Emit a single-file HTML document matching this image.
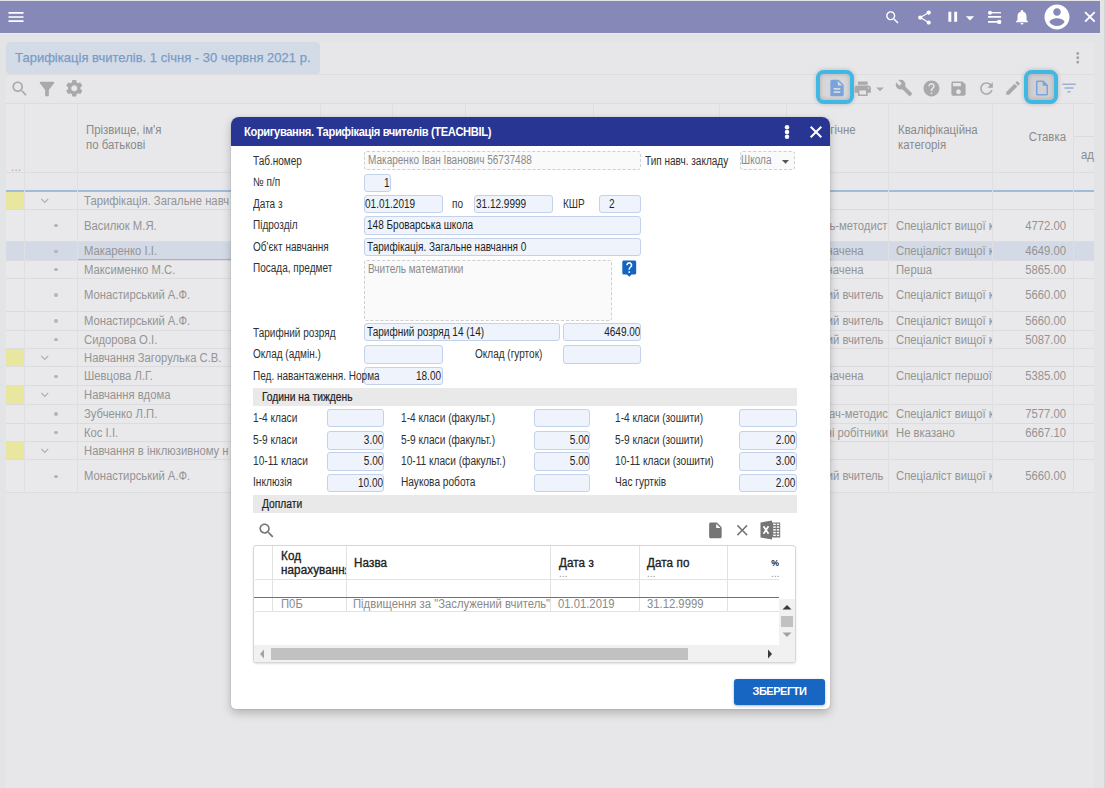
<!DOCTYPE html>
<html><head><meta charset="utf-8">
<style>
*{box-sizing:border-box;margin:0;padding:0}
html,body{width:1106px;height:788px;overflow:hidden}
body{position:relative;background:#e3e4e6;font-family:"Liberation Sans",sans-serif;font-size:12px;color:#8e8e8e}
.abs{position:absolute}
svg{position:absolute;display:block}
#topbar{left:0;top:1px;width:1100px;height:32px;background:#8688b7}
#sbar{left:1100px;top:0;width:6px;height:788px;background:#e4e4e6}
#sbar i{position:absolute;left:3.5px;top:0;width:2.5px;height:788px;background:#d5d5d7}
#panel{left:6px;top:42px;width:1087.5px;height:746px;background:#e7e7e9}
#tab{left:6px;top:42px;width:313.5px;height:32px;letter-spacing:.02px;background:#d3dbe7;border-radius:4px;color:#7b9bc6;-webkit-text-stroke:.25px #7b9bc6;font-size:13px;line-height:31px;padding-left:9px;white-space:nowrap}
.hl{background:#dcdcde;height:1px}
.vl{background:#dfdfe1;width:1px}
.t{white-space:nowrap;color:#949494;font-size:12px;letter-spacing:0}
.th{white-space:nowrap;color:#8a8a8a;font-size:12px}
.num{text-align:right}
.row{left:6px;width:1088px;background:#e9e9eb}
.dot{border-radius:2px;background:#b4b4b6}
.yel{background:#e9e6a0}
/* dialog */
#dlg{left:231px;top:117px;width:599px;height:592px;background:#fff;border-radius:8px 8px 5px 5px;box-shadow:0 4px 10px rgba(0,0,0,.23),0 0 2px rgba(0,0,0,.14)}
#dhead{left:231px;top:117px;width:599px;height:29px;background:#283593;border-radius:8px 8px 0 0}
.dt{white-space:nowrap;color:#fff;font-weight:bold;font-size:12px;letter-spacing:-.4px}
.l{white-space:nowrap;color:#303030;font-size:12px;letter-spacing:0}
.f{background:#eef3fc;border:1px solid #c3d2ea;border-radius:3px;color:#1f1f1f;font-size:12px;letter-spacing:0;white-space:nowrap;overflow:hidden;line-height:16px;padding:0 2px}
.fd{background:#fafafa;border:1px dashed #cfcfcf;border-radius:3px;color:#8a8a8a;font-size:12px;letter-spacing:0;white-space:nowrap;overflow:hidden;line-height:16px;padding:0 2.500px}
.r{text-align:right;padding-right:0}
.sec{background:#e9e9ea;color:#2b2b2b;font-size:12px;letter-spacing:0;white-space:nowrap}
.gh{white-space:nowrap;color:#222;font-size:12px;letter-spacing:.1px;-webkit-text-stroke:.35px #222}
.gt{white-space:nowrap;color:#8a8a8a;font-size:12px}
.sx{display:inline-block;transform:scaleX(.835);transform-origin:0 50%}
.r .sx{transform-origin:100% 50%}
</style></head><body>
<div class="abs" id="topbar"></div>
<div class="abs" style="left:0;top:33px;width:1100px;height:1px;background:#eaeaef"></div>
<div class="abs" id="sbar"><i></i></div>
<div class="abs" id="panel"></div>
<div class="abs" id="tab">Тарифікація вчителів. 1 січня - 30 червня 2021 р.</div>

<div class="abs " style="left:6px;top:74.2px;width:1088px;height:1px;background:#dededf"></div>
<div class="abs hl" style="left:6px;top:103px;width:1088px;height:1px;"></div>
<div class="abs " style="left:6px;top:104px;width:1088px;height:86px;background:#e8e8ea"></div>
<div class="abs hl" style="left:6px;top:172px;width:1088px;height:1px;"></div>
<div class="abs " style="left:6px;top:191px;width:1088px;height:18.4px;background:#e9e9eb"></div>
<div class="abs yel" style="left:6px;top:191px;width:18px;height:18.4px;"></div>
<svg style="left:36.55px;top:192.75px" width="15.50" height="15.50" viewBox="0 0 24 24" fill="#b4b4b6"><path d="M16.59 8.59L12 13.17 7.41 8.59 6 10l6 6 6-6z"/></svg>
<div class="abs t" style="left:84px;top:193.5px;line-height:14px;transform:scaleX(0.94);transform-origin:0 50%;">Тарифікація. Загальне навч</div>
<div class="abs " style="left:6px;top:209.4px;width:1088px;height:32.3px;background:#e9e9eb"></div>
<div class="abs dot" style="left:54.4px;top:224.25px;width:3.2px;height:3.2px;"></div>
<div class="abs t" style="left:84px;top:218.85px;line-height:14px;transform:scaleX(0.94);transform-origin:0 50%;">Василюк М.Я.</div>
<div class="abs t" style="left:787px;top:218.85px;line-height:14px;transform:scaleX(0.94);transform-origin:100% 50%;width:100.5px;text-align:right">ь-методист</div>
<div class="abs t" style="left:896px;top:218.85px;line-height:14px;transform:scaleX(0.94);transform-origin:0 50%;width:102.13px;overflow:hidden">Спеціаліст вищої к</div>
<div class="abs t" style="left:1000px;top:218.85px;line-height:14px;transform:scaleX(0.94);transform-origin:100% 50%;width:66px;text-align:right">4772.00</div>
<div class="abs " style="left:6px;top:241.7px;width:1088px;height:18.3px;background:#d3dae6"></div>
<div class="abs dot" style="left:54.4px;top:249.55px;width:3.2px;height:3.2px;"></div>
<div class="abs t" style="left:84px;top:244.15px;line-height:14px;transform:scaleX(0.94);transform-origin:0 50%;">Макаренко І.І.</div>
<div class="abs t" style="left:787px;top:244.15px;line-height:14px;transform:scaleX(0.94);transform-origin:100% 50%;width:76.5px;text-align:right">начена</div>
<div class="abs t" style="left:896px;top:244.15px;line-height:14px;transform:scaleX(0.94);transform-origin:0 50%;width:102.13px;overflow:hidden">Спеціаліст вищої к</div>
<div class="abs t" style="left:1000px;top:244.15px;line-height:14px;transform:scaleX(0.94);transform-origin:100% 50%;width:66px;text-align:right">4649.00</div>
<div class="abs " style="left:6px;top:260px;width:1088px;height:18.5px;background:#e9e9eb"></div>
<div class="abs dot" style="left:54.4px;top:267.95px;width:3.2px;height:3.2px;"></div>
<div class="abs t" style="left:84px;top:262.55px;line-height:14px;transform:scaleX(0.94);transform-origin:0 50%;">Максименко М.С.</div>
<div class="abs t" style="left:787px;top:262.55px;line-height:14px;transform:scaleX(0.94);transform-origin:100% 50%;width:76.5px;text-align:right">начена</div>
<div class="abs t" style="left:896px;top:262.55px;line-height:14px;transform:scaleX(0.94);transform-origin:0 50%;width:102.13px;overflow:hidden">Перша</div>
<div class="abs t" style="left:1000px;top:262.55px;line-height:14px;transform:scaleX(0.94);transform-origin:100% 50%;width:66px;text-align:right">5865.00</div>
<div class="abs " style="left:6px;top:278.5px;width:1088px;height:32.5px;background:#e9e9eb"></div>
<div class="abs dot" style="left:54.4px;top:293.45px;width:3.2px;height:3.2px;"></div>
<div class="abs t" style="left:84px;top:288.05px;line-height:14px;transform:scaleX(0.94);transform-origin:0 50%;">Монастирський А.Ф.</div>
<div class="abs t" style="left:787px;top:288.05px;line-height:14px;transform:scaleX(0.94);transform-origin:100% 50%;width:96.5px;text-align:right">ий вчитель</div>
<div class="abs t" style="left:896px;top:288.05px;line-height:14px;transform:scaleX(0.94);transform-origin:0 50%;width:102.13px;overflow:hidden">Спеціаліст вищої к</div>
<div class="abs t" style="left:1000px;top:288.05px;line-height:14px;transform:scaleX(0.94);transform-origin:100% 50%;width:66px;text-align:right">5660.00</div>
<div class="abs " style="left:6px;top:311px;width:1088px;height:19.5px;background:#e9e9eb"></div>
<div class="abs dot" style="left:54.4px;top:319.45px;width:3.2px;height:3.2px;"></div>
<div class="abs t" style="left:84px;top:314.05px;line-height:14px;transform:scaleX(0.94);transform-origin:0 50%;">Монастирський А.Ф.</div>
<div class="abs t" style="left:787px;top:314.05px;line-height:14px;transform:scaleX(0.94);transform-origin:100% 50%;width:96.5px;text-align:right">ий вчитель</div>
<div class="abs t" style="left:896px;top:314.05px;line-height:14px;transform:scaleX(0.94);transform-origin:0 50%;width:102.13px;overflow:hidden">Спеціаліст вищої к</div>
<div class="abs t" style="left:1000px;top:314.05px;line-height:14px;transform:scaleX(0.94);transform-origin:100% 50%;width:66px;text-align:right">5660.00</div>
<div class="abs " style="left:6px;top:330.5px;width:1088px;height:18px;background:#e9e9eb"></div>
<div class="abs dot" style="left:54.4px;top:338.2px;width:3.2px;height:3.2px;"></div>
<div class="abs t" style="left:84px;top:332.8px;line-height:14px;transform:scaleX(0.94);transform-origin:0 50%;">Сидорова О.І.</div>
<div class="abs t" style="left:787px;top:332.8px;line-height:14px;transform:scaleX(0.94);transform-origin:100% 50%;width:96.5px;text-align:right">ий вчитель</div>
<div class="abs t" style="left:896px;top:332.8px;line-height:14px;transform:scaleX(0.94);transform-origin:0 50%;width:102.13px;overflow:hidden">Спеціаліст вищої к</div>
<div class="abs t" style="left:1000px;top:332.8px;line-height:14px;transform:scaleX(0.94);transform-origin:100% 50%;width:66px;text-align:right">5087.00</div>
<div class="abs " style="left:6px;top:348.5px;width:1088px;height:18px;background:#e9e9eb"></div>
<div class="abs yel" style="left:6px;top:348.5px;width:18px;height:18px;"></div>
<svg style="left:36.55px;top:350.05px" width="15.50" height="15.50" viewBox="0 0 24 24" fill="#b4b4b6"><path d="M16.59 8.59L12 13.17 7.41 8.59 6 10l6 6 6-6z"/></svg>
<div class="abs t" style="left:84px;top:350.8px;line-height:14px;transform:scaleX(0.94);transform-origin:0 50%;">Навчання Загорулька С.В.</div>
<div class="abs " style="left:6px;top:366.5px;width:1088px;height:19.2px;background:#e9e9eb"></div>
<div class="abs dot" style="left:54.4px;top:374.8px;width:3.2px;height:3.2px;"></div>
<div class="abs t" style="left:84px;top:369.4px;line-height:14px;transform:scaleX(0.94);transform-origin:0 50%;">Шевцова Л.Г.</div>
<div class="abs t" style="left:787px;top:369.4px;line-height:14px;transform:scaleX(0.94);transform-origin:100% 50%;width:76.5px;text-align:right">начена</div>
<div class="abs t" style="left:896px;top:369.4px;line-height:14px;transform:scaleX(0.94);transform-origin:0 50%;width:102.13px;overflow:hidden">Спеціаліст першої</div>
<div class="abs t" style="left:1000px;top:369.4px;line-height:14px;transform:scaleX(0.94);transform-origin:100% 50%;width:66px;text-align:right">5385.00</div>
<div class="abs " style="left:6px;top:385.7px;width:1088px;height:18.3px;background:#e9e9eb"></div>
<div class="abs yel" style="left:6px;top:385.7px;width:18px;height:18.3px;"></div>
<svg style="left:36.55px;top:387.40px" width="15.50" height="15.50" viewBox="0 0 24 24" fill="#b4b4b6"><path d="M16.59 8.59L12 13.17 7.41 8.59 6 10l6 6 6-6z"/></svg>
<div class="abs t" style="left:84px;top:388.15px;line-height:14px;transform:scaleX(0.94);transform-origin:0 50%;">Навчання вдома</div>
<div class="abs " style="left:6px;top:404px;width:1088px;height:19.4px;background:#e9e9eb"></div>
<div class="abs dot" style="left:54.4px;top:412.4px;width:3.2px;height:3.2px;"></div>
<div class="abs t" style="left:84px;top:407px;line-height:14px;transform:scaleX(0.94);transform-origin:0 50%;">Зубченко Л.П.</div>
<div class="abs t" style="left:787px;top:407px;line-height:14px;transform:scaleX(0.94);transform-origin:100% 50%;width:101px;text-align:right">дач-методис</div>
<div class="abs t" style="left:896px;top:407px;line-height:14px;transform:scaleX(0.94);transform-origin:0 50%;width:102.13px;overflow:hidden">Спеціаліст вищої к</div>
<div class="abs t" style="left:1000px;top:407px;line-height:14px;transform:scaleX(0.94);transform-origin:100% 50%;width:66px;text-align:right">7577.00</div>
<div class="abs " style="left:6px;top:423.4px;width:1088px;height:18px;background:#e9e9eb"></div>
<div class="abs dot" style="left:54.4px;top:431.1px;width:3.2px;height:3.2px;"></div>
<div class="abs t" style="left:84px;top:425.7px;line-height:14px;transform:scaleX(0.94);transform-origin:0 50%;">Кос І.І.</div>
<div class="abs t" style="left:787px;top:425.7px;line-height:14px;transform:scaleX(0.94);transform-origin:100% 50%;width:101px;text-align:right">ні робітники</div>
<div class="abs t" style="left:896px;top:425.7px;line-height:14px;transform:scaleX(0.94);transform-origin:0 50%;width:102.13px;overflow:hidden">Не вказано</div>
<div class="abs t" style="left:1000px;top:425.7px;line-height:14px;transform:scaleX(0.94);transform-origin:100% 50%;width:66px;text-align:right">6667.10</div>
<div class="abs " style="left:6px;top:441.4px;width:1088px;height:17.9px;background:#e9e9eb"></div>
<div class="abs yel" style="left:6px;top:441.4px;width:18px;height:17.9px;"></div>
<svg style="left:36.55px;top:442.90px" width="15.50" height="15.50" viewBox="0 0 24 24" fill="#b4b4b6"><path d="M16.59 8.59L12 13.17 7.41 8.59 6 10l6 6 6-6z"/></svg>
<div class="abs t" style="left:84px;top:443.65px;line-height:14px;transform:scaleX(0.94);transform-origin:0 50%;">Навчання в інклюзивному н</div>
<div class="abs " style="left:6px;top:459.3px;width:1088px;height:33.3px;background:#e9e9eb"></div>
<div class="abs dot" style="left:54.4px;top:474.65px;width:3.2px;height:3.2px;"></div>
<div class="abs t" style="left:84px;top:469.25px;line-height:14px;transform:scaleX(0.94);transform-origin:0 50%;">Монастирський А.Ф.</div>
<div class="abs t" style="left:787px;top:469.25px;line-height:14px;transform:scaleX(0.94);transform-origin:100% 50%;width:96.5px;text-align:right">ий вчитель</div>
<div class="abs t" style="left:896px;top:469.25px;line-height:14px;transform:scaleX(0.94);transform-origin:0 50%;width:102.13px;overflow:hidden">Спеціаліст вищої к</div>
<div class="abs t" style="left:1000px;top:469.25px;line-height:14px;transform:scaleX(0.94);transform-origin:100% 50%;width:66px;text-align:right">5660.00</div>
<div class="abs hl" style="left:6px;top:208.9px;width:1088px;height:1px;"></div>
<div class="abs hl" style="left:6px;top:241.2px;width:1088px;height:1px;"></div>
<div class="abs hl" style="left:6px;top:259.5px;width:1088px;height:1px;"></div>
<div class="abs hl" style="left:6px;top:278px;width:1088px;height:1px;"></div>
<div class="abs hl" style="left:6px;top:310.5px;width:1088px;height:1px;"></div>
<div class="abs hl" style="left:6px;top:330px;width:1088px;height:1px;"></div>
<div class="abs hl" style="left:6px;top:348px;width:1088px;height:1px;"></div>
<div class="abs hl" style="left:6px;top:366px;width:1088px;height:1px;"></div>
<div class="abs hl" style="left:6px;top:385.2px;width:1088px;height:1px;"></div>
<div class="abs hl" style="left:6px;top:403.5px;width:1088px;height:1px;"></div>
<div class="abs hl" style="left:6px;top:422.9px;width:1088px;height:1px;"></div>
<div class="abs hl" style="left:6px;top:440.9px;width:1088px;height:1px;"></div>
<div class="abs hl" style="left:6px;top:458.8px;width:1088px;height:1px;"></div>
<div class="abs hl" style="left:6px;top:492.1px;width:1088px;height:1px;"></div>
<div class="abs " style="left:77.5px;top:259px;width:753px;height:1px;background:#9db4d4"></div>
<div class="abs " style="left:6px;top:190.4px;width:1088px;height:1.2px;background:#a2badb"></div>
<div class="abs vl" style="left:24px;top:104px;width:1px;height:388.6px;"></div>
<div class="abs vl" style="left:77px;top:104px;width:1px;height:388.6px;"></div>
<div class="abs vl" style="left:320px;top:104px;width:1px;height:388.6px;"></div>
<div class="abs vl" style="left:392px;top:104px;width:1px;height:388.6px;"></div>
<div class="abs vl" style="left:465px;top:104px;width:1px;height:388.6px;"></div>
<div class="abs vl" style="left:593px;top:104px;width:1px;height:388.6px;"></div>
<div class="abs vl" style="left:719px;top:104px;width:1px;height:388.6px;"></div>
<div class="abs vl" style="left:786px;top:104px;width:1px;height:388.6px;"></div>
<div class="abs vl" style="left:888px;top:104px;width:1px;height:388.6px;"></div>
<div class="abs vl" style="left:992px;top:104px;width:1px;height:388.6px;"></div>
<div class="abs vl" style="left:1073px;top:104px;width:1px;height:388.6px;"></div>
<div class="abs hl" style="left:1073px;top:136px;width:21px;height:1px;"></div>
<div class="abs th" style="left:85.8px;top:123px;line-height:14px;transform:scaleX(0.95);transform-origin:0 50%;">Прізвище, ім'я</div>
<div class="abs th" style="left:85.8px;top:138px;line-height:14px;transform:scaleX(0.95);transform-origin:0 50%;">по батькові</div>
<div class="abs th" style="left:11.3px;top:159.5px;line-height:14px;transform:scaleX(0.95);transform-origin:0 50%;color:#aaa;letter-spacing:.3px">...</div>
<div class="abs th" style="left:824px;top:123px;line-height:14px;transform:scaleX(0.95);transform-origin:0 50%;">огічне</div>
<div class="abs th" style="left:898px;top:123px;line-height:14px;transform:scaleX(0.95);transform-origin:0 50%;">Кваліфікаційна</div>
<div class="abs th" style="left:898px;top:138px;line-height:14px;transform:scaleX(0.95);transform-origin:0 50%;">категорія</div>
<div class="abs th" style="left:1000px;top:130px;line-height:14px;transform:scaleX(0.95);transform-origin:100% 50%;width:66px;text-align:right">Ставка</div>
<div class="abs th" style="left:1081px;top:148px;line-height:14px;transform:scaleX(0.95);transform-origin:0 50%;">ад</div>
<svg style="left:5.50px;top:7.00px" width="20.00" height="20.00" viewBox="0 0 24 24" fill="#fff"><path d="M3 18h18v-2H3v2zm0-5h18v-2H3v2zm0-7v2h18V6H3z"/></svg>
<svg style="left:883.50px;top:9.00px" width="17.00" height="17.00" viewBox="0 0 24 24" fill="#fff"><path d="M15.5 14h-.79l-.28-.27C15.41 12.59 16 11.11 16 9.5 16 5.91 13.09 3 9.5 3S3 5.91 3 9.5 5.91 16 9.5 16c1.61 0 3.09-.59 4.23-1.57l.27.28v.79l5 4.99L20.49 19l-4.99-5zm-6 0C7.01 14 5 11.99 5 9.5S7.01 5 9.5 5 14 7.01 14 9.5 11.99 14 9.5 14z"/></svg>
<svg style="left:915.50px;top:8.50px" width="17.00" height="17.00" viewBox="0 0 24 24" fill="#fff"><path d="M18 16.08c-.76 0-1.44.3-1.96.77L8.91 12.7c.05-.23.09-.46.09-.7s-.04-.47-.09-.7l7.05-4.11c.54.5 1.25.81 2.04.81 1.66 0 3-1.34 3-3s-1.34-3-3-3-3 1.34-3 3c0 .24.04.47.09.7L8.04 9.81C7.5 9.31 6.79 9 6 9c-1.66 0-3 1.34-3 3s1.34 3 3 3c.79 0 1.5-.31 2.04-.81l7.12 4.16c-.05.21-.08.43-.08.65 0 1.61 1.31 2.92 2.92 2.92 1.61 0 2.92-1.31 2.92-2.92s-1.31-2.92-2.92-2.92z"/></svg>
<svg style="left:944.35px;top:8.25px" width="17.50" height="17.50" viewBox="0 0 24 24" fill="#fff"><path d="M6 19h4V5H6v14zm8-14v14h4V5h-4z"/></svg>
<svg style="left:960.00px;top:7.70px" width="20.00" height="20.00" viewBox="0 0 24 24" fill="#fff"><path d="M7 10l5 5 5-5z"/></svg>
<svg style="left:986px;top:9px" width="18" height="16" viewBox="0 0 18 16" fill="none" stroke="#fff"><path d="M4 3.700h11" stroke-width="1.300"/><path d="M2 7.900h13M2 12.900h11" stroke-width="1.800"/><circle cx="4" cy="3.700" r="2" fill="#fff" stroke="none"/><circle cx="13.200" cy="12.900" r="2.200" fill="#fff" stroke="none"/></svg>
<svg style="left:1013.10px;top:7.90px" width="18.00" height="18.00" viewBox="0 0 24 24" fill="#fff"><path d="M12 22c1.1 0 2-.9 2-2h-4c0 1.1.89 2 2 2zm6-6v-5c0-3.07-1.64-5.64-4.5-6.32V4c0-.83-.67-1.5-1.5-1.5s-1.5.67-1.5 1.5v.68C7.63 5.36 6 7.92 6 11v5l-2 2v1h16v-1l-2-2z"/></svg>
<svg style="left:1042.00px;top:1.50px" width="30.00" height="30.00" viewBox="0 0 24 24" fill="#fff"><path d="M12 2C6.48 2 2 6.48 2 12s4.48 10 10 10 10-4.48 10-10S17.52 2 12 2zm0 3c1.66 0 3 1.34 3 3s-1.34 3-3 3-3-1.34-3-3 1.34-3 3-3zm0 14.2c-2.5 0-4.71-1.28-6-3.22.03-1.99 4-3.08 6-3.08 1.99 0 5.97 1.09 6 3.08-1.29 1.94-3.5 3.22-6 3.22z"/></svg>
<svg style="left:1082px;top:9.3px" width="16" height="16" viewBox="0 0 16 16" fill="none" stroke="#fff" stroke-width="1.900"><path d="M3.100 3.100L12.700 12.700M12.700 3.100L3.100 12.700"/></svg>
<svg style="left:1069.25px;top:49.45px" width="17.50" height="17.50" viewBox="0 0 24 24" fill="#a3a3a5"><path d="M12 8c1.1 0 2-.9 2-2s-.9-2-2-2-2 .9-2 2 .9 2 2 2zm0 2c-1.1 0-2 .9-2 2s.9 2 2 2 2-.9 2-2-.9-2-2-2zm0 6c-1.1 0-2 .9-2 2s.9 2 2 2 2-.9 2-2-.9-2-2-2z"/></svg>
<svg style="left:9.65px;top:79.05px" width="19.50" height="19.50" viewBox="0 0 24 24" fill="#a9a9ab"><path d="M15.5 14h-.79l-.28-.27C15.41 12.59 16 11.11 16 9.5 16 5.91 13.09 3 9.5 3S3 5.91 3 9.5 5.91 16 9.5 16c1.61 0 3.09-.59 4.23-1.57l.27.28v.79l5 4.99L20.49 19l-4.99-5zm-6 0C7.01 14 5 11.99 5 9.5S7.01 5 9.5 5 14 7.01 14 9.5 11.99 14 9.5 14z"/></svg>
<svg style="left:36.00px;top:77.60px" width="22.00" height="22.00" viewBox="0 0 24 24" fill="#a9a9ab"><path d="M4.25 5.61C6.27 8.2 10 13 10 13v6c0 .55.45 1 1 1h2c.55 0 1-.45 1-1v-6s3.72-4.8 5.74-7.39c.51-.66.04-1.61-.79-1.61H5.04c-.83 0-1.3.95-.79 1.61z"/></svg>
<svg style="left:64.05px;top:78.45px" width="20.50" height="20.50" viewBox="0 0 24 24" fill="#a9a9ab"><path d="M19.14 12.94c.04-.3.06-.61.06-.94 0-.32-.02-.64-.07-.94l2.03-1.58c.18-.14.23-.41.12-.61l-1.92-3.32c-.12-.22-.37-.29-.59-.22l-2.39.96c-.5-.38-1.03-.7-1.62-.94l-.36-2.54c-.04-.24-.24-.41-.48-.41h-3.84c-.24 0-.43.17-.47.41l-.36 2.54c-.59.24-1.13.57-1.62.94l-2.39-.96c-.22-.08-.47 0-.59.22L2.74 8.87c-.12.21-.08.47.12.61l2.03 1.58c-.05.3-.09.63-.09.94s.02.64.07.94l-2.03 1.58c-.18.14-.23.41-.12.61l1.92 3.32c.12.22.37.29.59.22l2.39-.96c.5.38 1.03.7 1.62.94l.36 2.54c.05.24.24.41.48.41h3.84c.24 0 .44-.17.47-.41l.36-2.54c.59-.24 1.13-.56 1.62-.94l2.39.96c.22.08.47 0 .59-.22l1.92-3.32c.12-.22.07-.47-.12-.61l-2.01-1.58zM12 15.6c-1.98 0-3.6-1.62-3.6-3.6s1.62-3.6 3.6-3.6 3.6 1.62 3.6 3.6-1.62 3.6-3.6 3.6z"/></svg>
<div class="abs " style="left:816.2px;top:69.7px;width:37.6px;height:34.1px;border:4.300px solid #3fb8e3;border-radius:8px;background:#d8d8da;box-shadow:0 0 4px rgba(0,0,0,.22),inset 0 0 5px rgba(120,90,90,.35)"></div>
<div class="abs " style="left:1024px;top:70px;width:34px;height:34.1px;border:4.300px solid #3fb8e3;border-radius:8px;background:#d0d0d2;box-shadow:0 0 4px rgba(0,0,0,.22),inset 0 0 5px rgba(120,90,90,.35)"></div>
<svg style="left:826.60px;top:78.20px" width="20.00" height="20.00" viewBox="0 0 24 24" fill="#78a3dc"><path d="M14 2H6c-1.1 0-1.99.9-1.99 2L4 20c0 1.1.89 2 1.99 2H18c1.1 0 2-.9 2-2V8l-6-6zm2 16H8v-2h8v2zm0-4H8v-2h8v2zm-3-5V3.5L18.5 9H13z"/></svg>
<svg style="left:852.75px;top:78.65px" width="19.50" height="19.50" viewBox="0 0 24 24" fill="#a9a9ab"><path d="M19 8H5c-1.66 0-3 1.34-3 3v6h4v4h12v-4h4v-6c0-1.66-1.34-3-3-3zm-3 11H8v-5h8v5zm3-7c-.55 0-1-.45-1-1s.45-1 1-1 1 .45 1 1-.45 1-1 1zm-1-9H6v4h12V3z"/></svg>
<svg style="left:870.60px;top:79.70px" width="18.00" height="18.00" viewBox="0 0 24 24" fill="#a9a9ab"><path d="M7 10l5 5 5-5z"/></svg>
<svg style="left:894.50px;top:79.00px" width="18.00" height="18.00" viewBox="0 0 24 24" fill="#a9a9ab"><path d="M22.7 19l-9.1-9.1c.9-2.3.4-5-1.5-6.9-2-2-5-2.4-7.4-1.3L9 6 6 9 1.6 4.7C.4 7.1.9 10.1 2.9 12.1c1.9 1.9 4.6 2.4 6.9 1.5l9.1 9.1c.4.4 1 .4 1.4 0l2.3-2.3c.5-.4.5-1.1.1-1.4z"/></svg>
<svg style="left:921.50px;top:78.50px" width="19.00" height="19.00" viewBox="0 0 24 24" fill="#a9a9ab"><path d="M12 2C6.48 2 2 6.48 2 12s4.48 10 10 10 10-4.48 10-10S17.52 2 12 2zm1 17h-2v-2h2v2zm2.07-7.75l-.9.92C13.45 12.9 13 13.5 13 15h-2v-.5c0-1.1.45-2.1 1.17-2.83l1.24-1.26c.37-.36.59-.86.59-1.41 0-1.1-.9-2-2-2s-2 .9-2 2H8c0-2.21 1.79-4 4-4s4 1.79 4 4c0 .88-.36 1.68-.93 2.25z"/></svg>
<svg style="left:948.50px;top:78.50px" width="19.00" height="19.00" viewBox="0 0 24 24" fill="#a9a9ab"><path d="M17 3H5c-1.11 0-2 .9-2 2v14c0 1.1.89 2 2 2h14c1.1 0 2-.9 2-2V7l-4-4zm-5 16c-1.66 0-3-1.34-3-3s1.34-3 3-3 3 1.34 3 3-1.34 3-3 3zm3-10H5V5h10v4z"/></svg>
<svg style="left:976.50px;top:78.50px" width="19.00" height="19.00" viewBox="0 0 24 24" fill="#a9a9ab"><path d="M17.65 6.35C16.2 4.9 14.21 4 12 4c-4.42 0-7.99 3.58-7.99 8s3.57 8 7.99 8c3.73 0 6.84-2.55 7.73-6h-2.08c-.82 2.33-3.04 4-5.65 4-3.31 0-6-2.69-6-6s2.69-6 6-6c1.66 0 3.14.69 4.22 1.78L13 11h7V4l-2.35 2.35z"/></svg>
<svg style="left:1004.00px;top:79.00px" width="18.00" height="18.00" viewBox="0 0 24 24" fill="#a9a9ab"><path d="M3 17.25V21h3.75L17.81 9.94l-3.75-3.75L3 17.25zM20.71 7.04c.39-.39.39-1.02 0-1.41l-2.34-2.34c-.39-.39-1.02-.39-1.41 0l-1.83 1.83 3.75 3.75 1.83-1.83z"/></svg>
<svg style="left:1032.50px;top:79.00px" width="18.00" height="18.00" viewBox="0 0 24 24" fill="#78a3dc"><path d="M14 2H6c-1.1 0-1.99.9-1.99 2L4 20c0 1.1.89 2 1.99 2H18c1.1 0 2-.9 2-2V8l-6-6zM6 20V4h7v5h5v11H6z"/></svg>
<svg style="left:1059.50px;top:79.00px" width="18.00" height="18.00" viewBox="0 0 24 24" fill="#9bb0d3"><path d="M10 18h4v-2h-4v2zM3 6v2h18V6H3zm3 7h12v-2H6v2z"/></svg>
<div class="abs" id="dlg"></div><div class="abs" id="dhead"></div>
<div class="abs dt" style="left:244px;top:124.5px;line-height:14px;transform:scaleX(0.93);transform-origin:0 50%;">Коригування. Тарифікація вчителів (TEACHBIL)</div>
<svg style="left:781.6px;top:121.75px" width="10" height="20" viewBox="0 0 10 20" fill="#fff"><circle cx="5" cy="5.15" r="2.25"/><circle cx="5" cy="10" r="2.25"/><circle cx="5" cy="14.85" r="2.25"/></svg>
<svg style="left:807.8px;top:123.6px" width="16" height="16" viewBox="0 0 16 16" fill="none" stroke="#fff" stroke-width="2"><path d="M2.700 2.800L13.300 13.200M13.300 2.800L2.700 13.200"/></svg>
<div class="abs l" style="left:252.9px;top:154px;line-height:14px;transform:scaleX(0.835);transform-origin:0 50%;">Таб.номер</div>
<div class="abs fd" style="left:364px;top:151.3px;width:277px;height:18.5px;"><span class="sx">Макаренко Іван Іванович 56737488</span></div>
<div class="abs l" style="left:645px;top:154px;line-height:14px;transform:scaleX(0.835);transform-origin:0 50%;">Тип навч. закладу</div>
<div class="abs fd" style="left:739.5px;top:151.3px;width:55.5px;height:18.5px;padding-left:0.5px"><span class="sx">Школа</span></div>
<svg style="left:777.00px;top:152.50px" width="17.00" height="17.00" viewBox="0 0 24 24" fill="#555"><path d="M7 10l5 5 5-5z"/></svg>
<div class="abs l" style="left:252.9px;top:175px;line-height:14px;transform:scaleX(0.835);transform-origin:0 50%;">№ п/п</div>
<div class="abs f r" style="left:364px;top:174.3px;width:27px;height:18px;line-height:16.0px;"><span class="sx">1</span></div>
<div class="abs l" style="left:252.9px;top:196.5px;line-height:14px;transform:scaleX(0.835);transform-origin:0 50%;">Дата з</div>
<div class="abs f" style="left:364px;top:195.3px;width:78.5px;height:18px;line-height:16.0px;padding-left:0"><span class="sx">01.01.2019</span></div>
<div class="abs l" style="left:452px;top:196.5px;line-height:14px;transform:scaleX(0.835);transform-origin:0 50%;">по</div>
<div class="abs f" style="left:474px;top:195.3px;width:79px;height:18px;line-height:16.0px;padding-left:1px"><span class="sx">31.12.9999</span></div>
<div class="abs l" style="left:563px;top:196.5px;line-height:14px;transform:scaleX(0.835);transform-origin:0 50%;">КШР</div>
<div class="abs f" style="left:599px;top:195.3px;width:42px;height:18px;line-height:16.0px;padding-left:9px"><span class="sx">2</span></div>
<div class="abs l" style="left:252.9px;top:218px;line-height:14px;transform:scaleX(0.835);transform-origin:0 50%;">Підрозділ</div>
<div class="abs f" style="left:364px;top:216.3px;width:277px;height:18.5px;line-height:16.5px;"><span class="sx">148 Броварська школа</span></div>
<div class="abs l" style="left:252.9px;top:239.5px;line-height:14px;transform:scaleX(0.835);transform-origin:0 50%;">Об'єкт навчання</div>
<div class="abs f" style="left:364px;top:237.8px;width:277px;height:18.5px;line-height:16.5px;"><span class="sx">Тарифікація. Загальне навчання 0</span></div>
<div class="abs l" style="left:252.9px;top:261px;line-height:14px;transform:scaleX(0.835);transform-origin:0 50%;">Посада, предмет</div>
<div class="abs fd" style="left:364px;top:259.5px;width:247.5px;height:61px;line-height:17px"><span class="sx">Вчитель математики</span></div>
<svg style="left:620.25px;top:259.35px" width="18.50" height="18.50" viewBox="0 0 24 24" fill="#1565c0"><path d="M19 2H5c-1.11 0-2 .9-2 2v14c0 1.1.89 2 2 2h4l3 3 3-3h4c1.1 0 2-.9 2-2V4c0-1.1-.9-2-2-2zm-6 16h-2v-2h2v2zm2.07-7.75l-.9.92C13.45 11.9 13 12.5 13 14h-2v-.5c0-1.1.45-2.1 1.17-2.83l1.24-1.26c.37-.36.59-.86.59-1.41 0-1.1-.9-2-2-2s-2 .9-2 2H8c0-2.21 1.79-4 4-4s4 1.79 4 4c0 .88-.36 1.68-.93 2.25z"/></svg>
<div class="abs l" style="left:252.9px;top:325.5px;line-height:14px;transform:scaleX(0.835);transform-origin:0 50%;">Тарифний розряд</div>
<div class="abs f" style="left:364px;top:322.8px;width:196px;height:18.5px;line-height:16.5px;"><span class="sx">Тарифний розряд 14 (14)</span></div>
<div class="abs f r" style="left:563px;top:322.8px;width:78px;height:18.5px;line-height:16.5px;"><span class="sx">4649.00</span></div>
<div class="abs l" style="left:252.9px;top:347px;line-height:14px;transform:scaleX(0.835);transform-origin:0 50%;">Оклад (адмін.)</div>
<div class="abs f" style="left:364px;top:345.3px;width:78.5px;height:18.5px;line-height:16.5px;"></div>
<div class="abs l" style="left:474.5px;top:347px;line-height:14px;transform:scaleX(0.835);transform-origin:0 50%;">Оклад (гурток)</div>
<div class="abs f" style="left:563px;top:345.3px;width:78px;height:18.5px;line-height:16.5px;"></div>
<div class="abs l" style="left:252.9px;top:368.5px;line-height:14px;transform:scaleX(0.835);transform-origin:0 50%;">Пед. навантаження. Норма</div>
<div class="abs f r" style="left:364px;top:366.8px;width:78.5px;height:18.5px;line-height:16.5px;"><span class="sx">18.00</span></div>
<div class="abs l" style="left:252.9px;top:368.5px;line-height:14px;transform:scaleX(0.835);transform-origin:0 50%;clip-path:inset(0 0 0 132px)">Пед. навантаження. Норма</div>
<div class="abs sec" style="left:253px;top:388px;width:543.5px;height:18px;"></div>
<div class="abs l" style="left:261.5px;top:390.2px;line-height:14px;transform:scaleX(0.855);transform-origin:0 50%;color:#222;-webkit-text-stroke:.2px #222">Години на тиждень</div>
<div class="abs l" style="left:252.9px;top:411px;line-height:14px;transform:scaleX(0.845);transform-origin:0 50%;">1-4 класи</div>
<div class="abs f r" style="left:326.5px;top:408.8px;width:57.5px;height:18.5px;line-height:16.5px;"></div>
<div class="abs l" style="left:401px;top:411px;line-height:14px;transform:scaleX(0.845);transform-origin:0 50%;">1-4 класи (факульт.)</div>
<div class="abs f r" style="left:533.5px;top:408.8px;width:56.5px;height:18.5px;line-height:16.5px;"></div>
<div class="abs l" style="left:614.7px;top:411px;line-height:14px;transform:scaleX(0.845);transform-origin:0 50%;">1-4 класи (зошити)</div>
<div class="abs f r" style="left:739px;top:408.8px;width:57.5px;height:18.5px;line-height:16.5px;"></div>
<div class="abs l" style="left:252.9px;top:432.5px;line-height:14px;transform:scaleX(0.845);transform-origin:0 50%;">5-9 класи</div>
<div class="abs f r" style="left:326.5px;top:430.8px;width:57.5px;height:19px;line-height:17.0px;"><span class="sx">3.00</span></div>
<div class="abs l" style="left:401px;top:432.5px;line-height:14px;transform:scaleX(0.845);transform-origin:0 50%;">5-9 класи (факульт.)</div>
<div class="abs f r" style="left:533.5px;top:430.8px;width:56.5px;height:19px;line-height:17.0px;"><span class="sx">5.00</span></div>
<div class="abs l" style="left:614.7px;top:432.5px;line-height:14px;transform:scaleX(0.845);transform-origin:0 50%;">5-9 класи (зошити)</div>
<div class="abs f r" style="left:739px;top:430.8px;width:57.5px;height:19px;line-height:17.0px;"><span class="sx">2.00</span></div>
<div class="abs l" style="left:252.9px;top:454px;line-height:14px;transform:scaleX(0.845);transform-origin:0 50%;">10-11 класи</div>
<div class="abs f r" style="left:326.5px;top:452.3px;width:57.5px;height:18.5px;line-height:16.5px;"><span class="sx">5.00</span></div>
<div class="abs l" style="left:401px;top:454px;line-height:14px;transform:scaleX(0.845);transform-origin:0 50%;">10-11 класи (факульт.)</div>
<div class="abs f r" style="left:533.5px;top:452.3px;width:56.5px;height:18.5px;line-height:16.5px;"><span class="sx">5.00</span></div>
<div class="abs l" style="left:614.7px;top:454px;line-height:14px;transform:scaleX(0.845);transform-origin:0 50%;">10-11 класи (зошити)</div>
<div class="abs f r" style="left:739px;top:452.3px;width:57.5px;height:18.5px;line-height:16.5px;"><span class="sx">3.00</span></div>
<div class="abs l" style="left:252.9px;top:475.3px;line-height:14px;transform:scaleX(0.845);transform-origin:0 50%;">Інклюзія</div>
<div class="abs f r" style="left:326.5px;top:473.5px;width:57.5px;height:18.5px;line-height:16.5px;"><span class="sx">10.00</span></div>
<div class="abs l" style="left:401px;top:475.3px;line-height:14px;transform:scaleX(0.845);transform-origin:0 50%;">Наукова робота</div>
<div class="abs f r" style="left:533.5px;top:473.5px;width:56.5px;height:18.5px;line-height:16.5px;"></div>
<div class="abs l" style="left:614.7px;top:475.3px;line-height:14px;transform:scaleX(0.845);transform-origin:0 50%;">Час гуртків</div>
<div class="abs f r" style="left:739px;top:473.5px;width:57.5px;height:18.5px;line-height:16.5px;"><span class="sx">2.00</span></div>
<div class="abs sec" style="left:253px;top:495px;width:543.5px;height:18px;"></div>
<div class="abs l" style="left:261.5px;top:497.2px;line-height:14px;transform:scaleX(0.855);transform-origin:0 50%;color:#222;-webkit-text-stroke:.2px #222">Доплати</div>
<svg style="left:256.90px;top:520.50px" width="19.20" height="19.20" viewBox="0 0 24 24" fill="#757575"><path d="M15.5 14h-.79l-.28-.27C15.41 12.59 16 11.11 16 9.5 16 5.91 13.09 3 9.5 3S3 5.91 3 9.5 5.91 16 9.5 16c1.61 0 3.09-.59 4.23-1.57l.27.28v.79l5 4.99L20.49 19l-4.99-5zm-6 0C7.01 14 5 11.99 5 9.5S7.01 5 9.5 5 14 7.01 14 9.5 11.99 14 9.5 14z"/></svg>
<svg style="left:706.00px;top:520.50px" width="18.80" height="18.80" viewBox="0 0 24 24" fill="#757575"><path d="M6 2c-1.1 0-1.99.9-1.99 2L4 20c0 1.1.89 2 1.99 2H18c1.1 0 2-.9 2-2V8l-6-6H6zm7 7V3.5L18.5 9H13z"/></svg>
<svg style="left:733.25px;top:520.95px" width="18.50" height="18.50" viewBox="0 0 24 24" fill="#757575"><path d="M19 6.41L17.59 5 12 10.59 6.41 5 5 6.41 10.59 12 5 17.59 6.41 19 12 13.41 17.59 19 19 17.59 13.41 12z"/></svg>
<svg style="left:759.5px;top:519.7px" width="21" height="20" viewBox="0 0 21 20"><path d="M12 0.5L0.5 2.5v15L12 19.5z" fill="#757575"/><rect x="12" y="2.5" width="8.2" height="15" fill="#757575"/><g fill="#fff"><rect x="13.2" y="3.60" width="2.6" height="1.5"/><rect x="16.8" y="3.60" width="2.4" height="1.5"/><rect x="13.2" y="6.35" width="2.6" height="1.5"/><rect x="16.8" y="6.35" width="2.4" height="1.5"/><rect x="13.2" y="9.10" width="2.6" height="1.5"/><rect x="16.8" y="9.10" width="2.4" height="1.5"/><rect x="13.2" y="11.85" width="2.6" height="1.5"/><rect x="16.8" y="11.85" width="2.4" height="1.5"/><rect x="13.2" y="14.60" width="2.6" height="1.5"/><rect x="16.8" y="14.60" width="2.4" height="1.5"/></g><path d="M3.5 6.300l5 7.400M8.500 6.300l-5 7.400" stroke="#fff" stroke-width="1.700" fill="none"/></svg>
<div class="abs " style="left:253px;top:544.5px;width:543px;height:118px;border:1px solid #d6d6d6;border-radius:3px;background:#fff;box-shadow:0 1px 2px rgba(0,0,0,.12)"></div>
<div class="abs " style="left:272px;top:545.5px;width:1px;height:66px;background:#e2e2e2"></div>
<div class="abs " style="left:345.5px;top:545.5px;width:1px;height:66px;background:#e2e2e2"></div>
<div class="abs " style="left:550px;top:545.5px;width:1px;height:66px;background:#e2e2e2"></div>
<div class="abs " style="left:638.5px;top:545.5px;width:1px;height:66px;background:#e2e2e2"></div>
<div class="abs " style="left:727px;top:545.5px;width:1px;height:66px;background:#e2e2e2"></div>
<div class="abs " style="left:254.5px;top:578.5px;width:524px;height:1px;background:#e2e2e2"></div>
<div class="abs " style="left:254.5px;top:611px;width:524px;height:1px;background:#e2e2e2"></div>
<div class="abs " style="left:254px;top:597px;width:524.5px;height:1px;background:#5079a8"></div>
<div class="abs gh" style="left:280.5px;top:548.5px;line-height:14px;transform:scaleX(0.97);transform-origin:0 50%;">Код</div>
<div class="abs gh" style="left:280.5px;top:562.5px;line-height:14px;transform:scaleX(0.97);transform-origin:0 50%;width:67.01px;overflow:hidden">нарахування</div>
<div class="abs gh" style="left:354px;top:555.5px;line-height:14px;transform:scaleX(0.97);transform-origin:0 50%;">Назва</div>
<div class="abs gh" style="left:558.5px;top:555.5px;line-height:14px;transform:scaleX(0.97);transform-origin:0 50%;">Дата з</div>
<div class="abs gh" style="left:647px;top:555.5px;line-height:14px;transform:scaleX(0.97);transform-origin:0 50%;">Дата по</div>
<div class="abs gh" style="left:740px;top:555.5px;line-height:14px;transform:scaleX(0.97);transform-origin:100% 50%;width:39px;text-align:right;font-size:9px;font-weight:bold;-webkit-text-stroke:0;color:#222">%</div>
<div class="abs gt" style="left:558.5px;top:567.3px;line-height:14px;transform:scaleX(0.94);transform-origin:0 50%;font-size:10px;color:#8c8c8c;letter-spacing:.3px">...</div>
<div class="abs gt" style="left:647px;top:567.3px;line-height:14px;transform:scaleX(0.94);transform-origin:0 50%;font-size:10px;color:#8c8c8c;letter-spacing:.3px">...</div>
<div class="abs gt" style="left:771px;top:567.3px;line-height:14px;transform:scaleX(0.94);transform-origin:0 50%;font-size:10px;color:#8c8c8c;letter-spacing:.3px">...</div>
<div class="abs gt" style="left:280.5px;top:597px;line-height:14px;transform:scaleX(0.94);transform-origin:0 50%;">П0Б</div>
<div class="abs gt" style="left:352.5px;top:597px;line-height:14px;transform:scaleX(0.94);transform-origin:0 50%;width:209.57px;overflow:hidden">Підвищення за "Заслужений вчитель"</div>
<div class="abs gt" style="left:558px;top:597px;line-height:14px;transform:scaleX(0.94);transform-origin:0 50%;">01.01.2019</div>
<div class="abs gt" style="left:646.5px;top:597px;line-height:14px;transform:scaleX(0.94);transform-origin:0 50%;">31.12.9999</div>
<div class="abs " style="left:778.5px;top:598.5px;width:16.5px;height:47px;background:#f1f1f1"></div>
<div class="abs " style="left:780.5px;top:615.7px;width:12.7px;height:11.5px;background:#c1c1c1"></div>
<svg style="left:781px;top:603px" width="12" height="8" viewBox="0 0 12 8"><path d="M1.5 6.500L6 2l4.500 4.500z" fill="#3a3a3a"/></svg>
<svg style="left:781px;top:631px" width="12" height="8" viewBox="0 0 12 8"><path d="M1.5 1.500L6 6l4.500-4.500z" fill="#a3a3a3"/></svg>
<div class="abs " style="left:254px;top:645px;width:541px;height:16.5px;background:#f1f1f1;border-radius:0 0 2px 2px"></div>
<div class="abs " style="left:271.3px;top:648px;width:417px;height:12px;background:#c1c1c1"></div>
<svg style="left:258px;top:648px" width="8" height="12" viewBox="0 0 8 12"><path d="M6 1.500L2 6l4 4.500z" fill="#a3a3a3"/></svg>
<svg style="left:766px;top:648px" width="8" height="12" viewBox="0 0 8 12"><path d="M2 1.500L6 6l-4 4.500z" fill="#3a3a3a"/></svg>
<div class="abs " style="left:734px;top:679px;width:91px;height:25.7px;background:#1666c2;border-radius:3px;color:#fff;font-weight:bold;font-size:11px;line-height:24.5px;text-align:center;letter-spacing:-.45px;box-shadow:0 1px 3px rgba(0,0,0,.3)">ЗБЕРЕГТИ</div>
</body></html>
